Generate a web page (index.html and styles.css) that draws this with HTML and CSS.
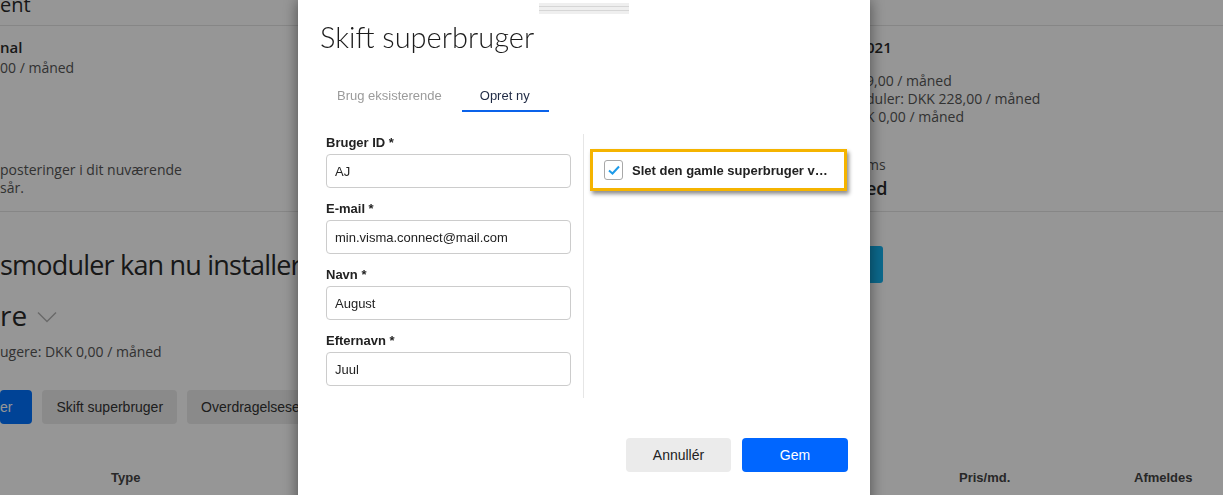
FILE: index.html
```html
<!DOCTYPE html>
<html lang="da">
<head>
  <meta charset="UTF-8">
  <meta name="viewport" content="width=device-width, initial-scale=1.0">
  <title>Skift superbruger</title>
  <link rel="stylesheet" href="styles.css">
</head>
<body>
  <div class="page">
    <div class="page-head">
      <h1 class="page-title">ent</h1>
    </div>

    <div class="summary">
      <div class="summary-left">
        <p class="plan-name">nal</p>
        <p class="plan-line">00 / måned</p>
        <p class="plan-note">posteringer i dit nuværende<br>sår.</p>
      </div>
      <div class="summary-right">
        <p class="plan-name">021</p>
        <p class="plan-line first">9,00 / måned</p>
        <p class="plan-line">duler: DKK 228,00 / måned</p>
        <p class="plan-line">K 0,00 / måned</p>
        <p class="plan-line gap">ms</p>
        <p class="plan-status">ed</p>
      </div>
    </div>

    <div class="modules">
      <div class="modules-head">
        <h2 class="modules-title">smoduler kan nu installeres</h2>
        <button class="btn-teal">Installér</button>
      </div>
      <h2 class="users-title">re
        <svg class="chevron" width="20" height="12" viewBox="0 0 20 12"><polyline points="1,1.5 10,10.5 19,1.5" fill="none" stroke="#b5b5b5" stroke-width="1.5"/></svg>
      </h2>
      <p class="plan-line users-price">ugere: DKK 0,00 / måned</p>
      <div class="user-actions">
        <button class="page-btn blue">er</button>
        <button class="page-btn">Skift superbruger</button>
        <button class="page-btn">Overdragelseserklæring</button>
      </div>
      <div class="table-head">
        <span>Type</span>
        <span>Pris/md.</span>
        <span>Afmeldes</span>
      </div>
    </div>
  </div>

  <div class="backdrop"></div>

  <div class="modal">
    <div class="handle"></div>
    <h2 class="modal-title">Skift superbruger</h2>

    <div class="tabs">
      <button class="tab">Brug eksisterende</button>
      <button class="tab active">Opret ny</button>
    </div>

    <div class="form">
      <div class="fields">
        <div class="field">
          <label for="user-id">Bruger ID *</label>
          <input type="text" id="user-id" value="AJ">
        </div>
        <div class="field">
          <label for="email">E-mail *</label>
          <input type="text" id="email" value="min.visma.connect@mail.com">
        </div>
        <div class="field">
          <label for="first-name">Navn *</label>
          <input type="text" id="first-name" value="August">
        </div>
        <div class="field">
          <label for="last-name">Efternavn *</label>
          <input type="text" id="last-name" value="Juul">
        </div>
      </div>
      <div class="options">
        <div class="check-box">
          <span class="check">
            <svg width="14" height="12" viewBox="0 0 14 12"><polyline points="2,6.5 5.5,9.5 12,2.5" fill="none" stroke="#1e9be9" stroke-width="2"/></svg>
          </span>
          <span class="check-label">Slet den gamle superbruger ved skift</span>
        </div>
      </div>
    </div>

    <div class="modal-footer">
      <button class="btn-cancel">Annullér</button>
      <button class="btn-save">Gem</button>
    </div>
  </div>
</body>
</html>
```

FILE: styles.css
```css
* {
  box-sizing: border-box;
}

body {
  margin: 0;
  overflow: hidden;
  background-color: #ffffff;
  font-family: "Open Sans", "Liberation Sans", sans-serif;
  color: #333333;
}

p,
h1,
h2 {
  margin: 0;
}

/* page behind the dialog */

.page-head {
  display: flex;
  align-items: flex-start;
  height: 26px;
  border-bottom: 1px solid #e4e4e4;
}

.page-title {
  margin-top: -5px;
  font-size: 20px;
  line-height: 20px;
  font-weight: 400;
  color: #2a2a2a;
}

.summary {
  display: grid;
  grid-template-columns: 298px 568px 1fr;
  height: 186px;
  border-bottom: 1px solid #e4e4e4;
}

.summary-left {
  grid-column: 1;
  padding-top: 11px;
}

.summary-right {
  grid-column: 3;
  padding-top: 11px;
}

.plan-name {
  font-size: 15px;
  line-height: 20px;
  font-weight: 600;
  color: #2a2a2a;
}

.plan-line {
  font-size: 14px;
  line-height: 18px;
  color: #555555;
}

.summary-left .plan-line {
  margin-top: 2px;
}

.plan-line.first {
  margin-top: 15px;
}

.plan-line.gap {
  margin-top: 30px;
}

.plan-note {
  margin-top: 84px;
  font-size: 14px;
  line-height: 18px;
  color: #555555;
}

.plan-status {
  margin-top: 2px;
  font-size: 18px;
  line-height: 24px;
  font-weight: 600;
  color: #2a2a2a;
}

.modules-head {
  display: flex;
  justify-content: space-between;
  align-items: center;
  height: 37px;
  margin-top: 34px;
  padding-right: 340px;
}

.modules-title {
  max-width: 298px;
  overflow: hidden;
  font-size: 27px;
  line-height: 37px;
  font-weight: 400;
  letter-spacing: -0.8px;
  white-space: nowrap;
  color: #2a2a2a;
}

.btn-teal {
  width: 120px;
  height: 37px;
  border: 0;
  border-radius: 3px;
  background-color: #14b2ee;
  color: #ffffff;
}

.users-title {
  display: flex;
  align-items: center;
  margin-top: 15px;
  font-size: 28px;
  line-height: 34px;
  font-weight: 400;
  color: #2a2a2a;
}

.chevron {
  margin-left: 10px;
  margin-top: 3px;
}

.users-price {
  margin-top: 10px;
  line-height: 20px;
}

.user-actions {
  display: flex;
  gap: 10px;
  width: 298px;
  margin-top: 28px;
  overflow: hidden;
}

.page-btn {
  flex-shrink: 0;
  height: 34px;
  padding: 0 14px;
  border: 0;
  border-radius: 4px;
  background-color: #ebebeb;
  font-family: "Liberation Sans", Arial, sans-serif;
  font-size: 14px;
  color: #333333;
  white-space: nowrap;
}

.page-btn.blue {
  padding: 0 20px 0 0;
  background-color: #0072ff;
  color: #ffffff;
}

.table-head {
  display: grid;
  grid-template-columns: 848px 175px 1fr;
  margin-top: 46px;
  padding-left: 111px;
  font-family: "Liberation Sans", Arial, sans-serif;
  font-size: 13px;
  line-height: 16px;
  font-weight: bold;
  color: #444444;
}

.backdrop {
  position: fixed;
  top: 0;
  left: 0;
  right: 0;
  bottom: 0;
  background-color: rgba(0, 0, 0, 0.41);
}

/* dialog */

.modal {
  position: fixed;
  top: 0;
  left: 298px;
  width: 572px;
  height: 520px;
  padding: 3px 22px 0;
  background-color: #ffffff;
  box-shadow: 0 0 14px rgba(0, 0, 0, 0.5);
  font-family: "Liberation Sans", Arial, sans-serif;
  color: #222222;
}

.handle {
  width: 90px;
  height: 11px;
  margin: 0 auto;
  background: linear-gradient(to bottom, #efefef 0 3px, #d6d6d6 3px 4px, #efefef 4px 7px, #d6d6d6 7px 8px, #efefef 8px);
}

.modal-title {
  margin-top: 6px;
  font-family: Lato, "Open Sans", sans-serif;
  font-size: 29px;
  line-height: 34px;
  font-weight: 300;
  color: #1b1b1b;
}

.tabs {
  display: flex;
  gap: 3px;
  margin-top: 24px;
}

.tab {
  padding: 10px 17px 6px;
  border: 0;
  border-bottom: 2px solid transparent;
  background: none;
  font-family: inherit;
  font-size: 13px;
  line-height: 16px;
  color: #9b9b9b;
}

.tab.active {
  padding: 10px 19px 6px 18px;
  border-bottom-color: #0a62ea;
  color: #1f2a44;
}

.form {
  display: flex;
  margin-top: 22px;
  padding-left: 6px;
}

.fields {
  width: 245px;
  margin-right: 12px;
}

.field {
  margin-bottom: 12px;
}

.field label {
  display: block;
  margin-bottom: 2px;
  font-size: 13px;
  line-height: 18px;
  font-weight: bold;
  color: #222222;
}

.field input {
  display: block;
  width: 100%;
  height: 34px;
  padding: 0 8px;
  border: 1px solid #cccccc;
  border-radius: 4px;
  font-family: inherit;
  font-size: 13px;
  color: #222222;
}

.options {
  flex: 1;
  padding: 15px 0 0 6px;
  border-left: 1px solid #e6e6e6;
}

.check-box {
  display: flex;
  align-items: center;
  gap: 9px;
  width: 257px;
  height: 42px;
  padding: 0 12px 0 11px;
  border: 3px solid #f5b400;
  box-shadow: 2px 3px 4px rgba(0, 0, 0, 0.45);
}

.check {
  display: flex;
  align-items: center;
  justify-content: center;
  flex-shrink: 0;
  width: 19px;
  height: 20px;
  border: 1px solid #a8a8a8;
  border-radius: 3px;
}

.check-label {
  overflow: hidden;
  white-space: nowrap;
  text-overflow: ellipsis;
  font-size: 13px;
  font-weight: bold;
  color: #222222;
}

.modal-footer {
  display: flex;
  justify-content: flex-end;
  gap: 11px;
  margin-top: 40px;
}

.btn-cancel,
.btn-save {
  height: 34px;
  border: 0;
  border-radius: 4px;
  font-family: inherit;
  font-size: 14px;
}

.btn-cancel {
  width: 105px;
  background-color: #ebebeb;
  color: #222222;
}

.btn-save {
  width: 106px;
  background-color: #0066ff;
  color: #ffffff;
}
```
